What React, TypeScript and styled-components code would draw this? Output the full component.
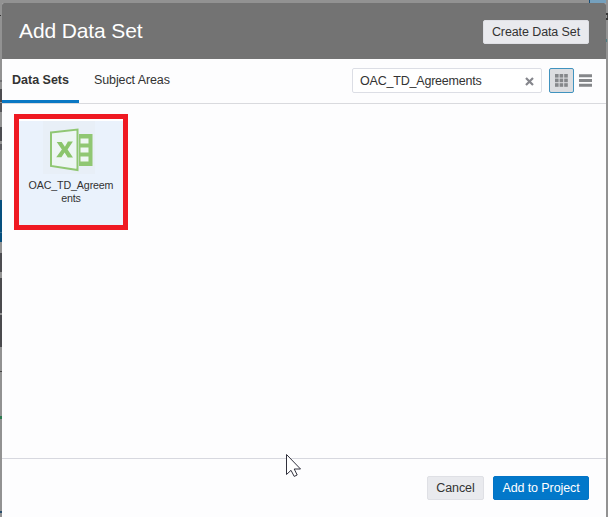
import React from "react";
import styled, { createGlobalStyle } from "styled-components";

const GlobalStyle = createGlobalStyle`
  * { box-sizing: border-box; }
  body {
    margin: 0;
    overflow: hidden;
    font-family: "Liberation Sans", Arial, sans-serif;
    color: #333;
  }
  button, input { font-family: inherit; }
`;

const Page = styled.div`
  position: relative;
  width: 608px;
  height: 517px;
  padding: 3px 2px 0;
  overflow: hidden;
  background: #929292;
`;

const Backdrop = styled.div`
  position: absolute;
  inset: 0;
`;

const Fragment = styled.div<{ $x: number; $y: number; $w: number; $h: number; $color: string }>`
  position: absolute;
  left: ${(p) => p.$x}px;
  top: ${(p) => p.$y}px;
  width: ${(p) => p.$w}px;
  height: ${(p) => p.$h}px;
  background: ${(p) => p.$color};
`;

const Dialog = styled.section`
  position: relative;
  display: flex;
  flex-direction: column;
  height: 514px;
  background: #fdfdfe;
  border-radius: 2px 2px 0 0;
  overflow: hidden;
`;

const Header = styled.header`
  display: flex;
  flex: 0 0 56px;
  align-items: center;
  justify-content: space-between;
  padding: 1px 17px 0 17px;
  background: #737373;
`;

const Title = styled.h1`
  margin: 0 0 2px;
  font-size: 21px;
  font-weight: 400;
  line-height: 24px;
  letter-spacing: -0.12px;
  color: #fff;
`;

const Button = styled.button<{ $primary?: boolean; $width: number }>`
  width: ${(p) => p.$width}px;
  height: 24px;
  padding: 0;
  border: 1px solid ${(p) => (p.$primary ? "#0374c6" : "#dfe0e5")};
  border-radius: 2px;
  background: ${(p) => (p.$primary ? "#0278ca" : "#e9eaee")};
  color: ${(p) => (p.$primary ? "#fff" : "#333")};
  font-size: 12.5px;
  line-height: 22px;
  letter-spacing: -0.1px;
  white-space: nowrap;
`;

const Toolbar = styled.div`
  display: flex;
  flex: 0 0 45px;
  justify-content: space-between;
  padding-right: 14px;
  border-bottom: 1px solid #d9dade;
`;

const Tabs = styled.nav`
  display: flex;
  height: 44px;
`;

const Tab = styled.div<{ $active?: boolean }>`
  height: 44px;
  padding: ${(p) => (p.$active ? "0 10px" : "0 15px")};
  border-bottom: ${(p) => (p.$active ? "3px solid #0a78c4" : "0")};
  font-size: 12.5px;
  font-weight: ${(p) => (p.$active ? 700 : 400)};
  line-height: 43px;
  letter-spacing: ${(p) => (p.$active ? "0" : "-0.1px")};
  white-space: nowrap;
`;

const Tools = styled.div`
  display: flex;
  align-items: flex-start;
  padding-top: 9px;
`;

const SearchBox = styled.div`
  display: flex;
  align-items: center;
  justify-content: space-between;
  width: 190px;
  height: 25px;
  padding: 1px 7px 0 7px;
  border: 1px solid #dcdee5;
  border-radius: 2px;
  background: #fff;
  font-size: 12.5px;
  letter-spacing: -0.2px;
`;

const ViewButton = styled.div<{ $active?: boolean }>`
  display: flex;
  align-items: center;
  justify-content: center;
  width: ${(p) => (p.$active ? 25 : 13)}px;
  height: 25px;
  margin-left: ${(p) => (p.$active ? 7 : 5)}px;
  border: ${(p) => (p.$active ? "1px solid #4093bf" : "0")};
  border-radius: 2px;
  background: ${(p) => (p.$active ? "#dcdde0" : "transparent")};
`;

const Content = styled.main`
  flex: 1;
  padding: 10px 12px;
`;

const Tile = styled.div`
  display: flex;
  flex-direction: column;
  align-items: center;
  width: 114px;
  height: 116px;
  padding-top: 2px;
  border: 5px solid #ef1922;
  background: #eaf2fc;
  box-shadow: inset 0 2px #fff;
`;

const TileIcon = styled.div`
  width: 52px;
  height: 53px;
  margin-right: 5px;
  background: #e8eff7;
  svg { display: block; }
`;

const TileLabel = styled.div`
  width: 88px;
  margin-top: 5px;
  font-size: 10.7px;
  line-height: 13px;
  letter-spacing: -0.15px;
  text-align: center;
  white-space: pre-line;
`;

const Footer = styled.footer`
  display: flex;
  flex: 0 0 59px;
  justify-content: flex-end;
  gap: 9px;
  padding: 17px 17px 0 0;
  border-top: 1px solid #d7d8df;
`;

const Cursor = styled.svg`
  position: absolute;
  left: 285px;
  top: 453px;
`;

const fragments: [number, number, number, number, string][] = [
  [0, 15, 1, 1, "#333"],
  [0, 80, 2, 2, "#707073"],
  [0, 89, 2, 13, "#4c4c50"],
  [0, 103, 2, 9, "#56565a"],
  [0, 127, 2, 14, "#4c4c50"],
  [0, 144, 2, 6, "#5d5d61"],
  [0, 200, 2, 42, "#064f7e"],
  [0, 232, 2, 1, "#387092"],
  [0, 253, 2, 19, "#4d4d51"],
  [0, 278, 2, 35, "#4a4a4e"],
  [0, 315, 2, 32, "#4a4a4e"],
  [0, 371, 2, 1, "#444"],
  [0, 416, 2, 3, "#2c7a50"],
  [0, 511, 2, 2, "#284d6c"],
  [589, 0, 1, 3, "#154f7b"],
  [590, 0, 16, 3, "#75a0bd"],
  [606, 13, 2, 2, "#353535"],
  [607, 15, 1, 3, "#474747"],
  [606, 18, 2, 2, "#353535"],
  [606, 39, 1, 3, "#4d8187"],
];

const CloseIcon = () => (
  <svg width="9" height="9" viewBox="0 0 9 9">
    <path d="M1 1 8 8M8 1 1 8" stroke="#85868c" strokeWidth="2.2" />
  </svg>
);

const GridIcon = () => (
  <svg width="13" height="13" viewBox="0 0 13 13" fill="#85878a">
    {[0, 4.6, 9.2].map((y) =>
      [0, 4.6, 9.2].map((x) => <rect key={`${x}-${y}`} x={x} y={y} width="3.6" height="3.6" />),
    )}
  </svg>
);

const ListIcon = () => (
  <svg width="13" height="13" viewBox="0 0 13 13" fill="#85878a">
    <path d="M0 .2h13v3H0zM0 5h13v3H0zM0 9.8h13v3H0z" />
  </svg>
);

const SpreadsheetIcon = () => (
  <svg width="52" height="53" viewBox="0 0 52 53">
    <path d="M36 13h13.5v32H36z" fill="#90c773" />
    <path d="M37.5 17.5h8v5h-8zM37.5 26.5h8v5h-8zM37.5 35.5h8v5h-8z" fill="#eff7f4" />
    <path d="M8 11.5 34.5 8.5v40.5L8 45z" fill="#edf6f4" stroke="#90c773" strokeWidth="2" />
    <path d="M13.7 21h5l3.2 4.8 3-5.3h5l-5.3 7.9 5.4 8.2h-5.2l-3.2-5.2-3.2 4.9h-5.2l5.7-7.9z" fill="#8bc56c" />
  </svg>
);

export default function App() {
  return (
    <>
      <GlobalStyle />
      <Page>
        <Backdrop>
          {fragments.map(([x, y, w, h, color]) => (
            <Fragment key={`${x}-${y}`} $x={x} $y={y} $w={w} $h={h} $color={color} />
          ))}
        </Backdrop>
        <Dialog>
          <Header>
            <Title>Add Data Set</Title>
            <Button $width={106}>Create Data Set</Button>
          </Header>
          <Toolbar>
            <Tabs>
              <Tab $active>Data Sets</Tab>
              <Tab>Subject Areas</Tab>
            </Tabs>
            <Tools>
              <SearchBox>
                <span>OAC_TD_Agreements</span>
                <CloseIcon />
              </SearchBox>
              <ViewButton $active>
                <GridIcon />
              </ViewButton>
              <ViewButton>
                <ListIcon />
              </ViewButton>
            </Tools>
          </Toolbar>
          <Content>
            <Tile>
              <TileIcon>
                <SpreadsheetIcon />
              </TileIcon>
              <TileLabel>{"OAC_TD_Agreem\nents"}</TileLabel>
            </Tile>
          </Content>
          <Footer>
            <Button $width={57}>Cancel</Button>
            <Button $primary $width={96}>Add to Project</Button>
          </Footer>
        </Dialog>
        <Cursor width="18" height="26" viewBox="0 0 18 26">
          <path d="M1.5 1.5v20l4.5-4.2 3.2 6.1 3-1.4-3-6h6.3z" fill="#fff" stroke="#30303c" strokeWidth="1" />
        </Cursor>
      </Page>
    </>
  );
}
